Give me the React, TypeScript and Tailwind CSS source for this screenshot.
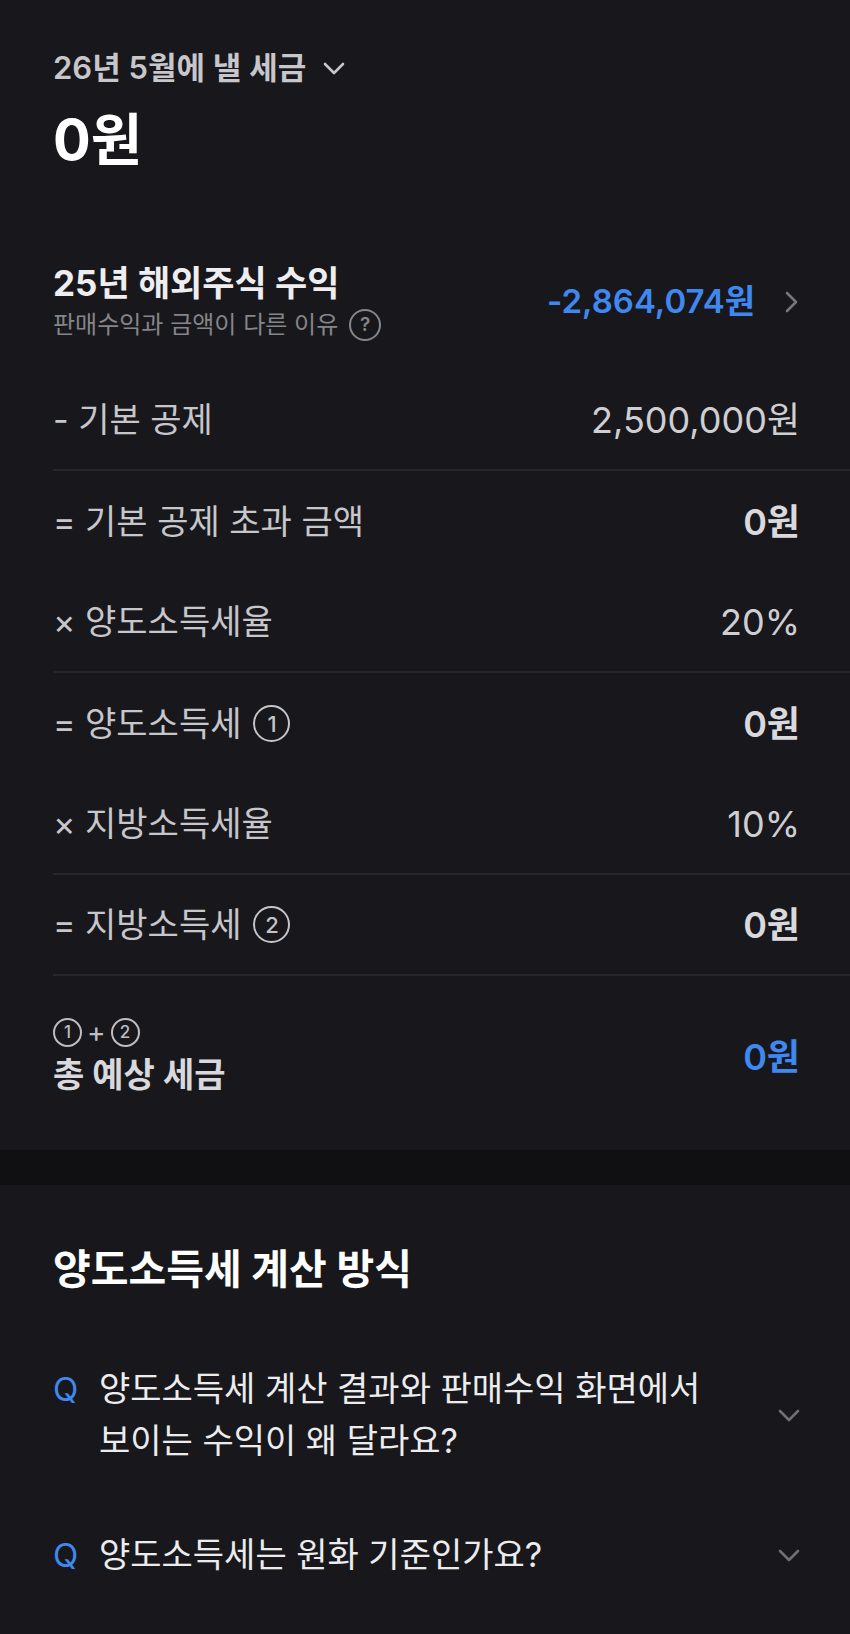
import React from "react";

type Row = {
  label: React.ReactNode;
  value: string;
  bold?: boolean;
  divider?: boolean;
};

function Circ({ n, small }: { n: number; small?: boolean }) {
  return (
    <span
      className={
        small
          ? "inline-flex w-[29px] h-[29px] rounded-full border-2 border-[#bdbdc2] items-center justify-center text-[17px] font-medium text-[#bdbdc2] leading-none"
          : "inline-flex w-[37px] h-[37px] rounded-full border-2 border-[#c4c4c9] items-center justify-center text-[22px] font-medium text-[#c4c4c9] leading-none"
      }
    >
      {n}
    </span>
  );
}

function Down({ className }: { className?: string }) {
  return (
    <svg width="22" height="13" viewBox="0 0 22 13" fill="none" className={className}>
      <polyline points="2,2 11,11 20,2" stroke="currentColor" strokeWidth="2.6" strokeLinecap="round" strokeLinejoin="round" />
    </svg>
  );
}

const rows: Row[] = [
  { label: "- 기본 공제", value: "2,500,000원", divider: true },
  { label: "= 기본 공제 초과 금액", value: "0원", bold: true },
  { label: "× 양도소득세율", value: "20%", divider: true },
  {
    label: (
      <span className="flex items-center gap-[12px]">
        = 양도소득세 <Circ n={1} />
      </span>
    ),
    value: "0원",
    bold: true,
  },
  { label: "× 지방소득세율", value: "10%", divider: true },
  {
    label: (
      <span className="flex items-center gap-[12px]">
        = 지방소득세 <Circ n={2} />
      </span>
    ),
    value: "0원",
    bold: true,
    divider: true,
  },
];

const faqs = [
  ["양도소득세 계산 결과와 판매수익 화면에서", "보이는 수익이 왜 달라요?"],
  ["양도소득세는 원화 기준인가요?"],
];

export default function App() {
  return (
    <div className="min-h-[1634px] bg-[#18181c] font-['Inter','Noto_Sans_CJK_KR',sans-serif]">
      {/* Summary */}
      <section className="pt-[48px]">
        <div className="px-[53px]">
          <button className="flex items-center h-[40px] gap-[17px] text-[31px] font-semibold text-[#c6c6cb]">
            26년 5월에 낼 세금
            <Down className="text-[#c6c6cb]" />
          </button>
          <p className="mt-[20px] h-[64px] leading-[64px] text-[56px] font-bold text-white">0원</p>
        </div>

        <div className="mt-[89px] pl-[53px] pr-[51px] flex items-center justify-between">
          <div>
            <p className="text-[35px] font-bold leading-[44px] text-[#eeeef0]">25년 해외주식 수익</p>
            <div className="mt-[2px] flex items-center gap-[11px] h-[36px]">
              <span className="text-[24px] text-[#85858a]">판매수익과 금액이 다른 이유</span>
              <span className="w-[32px] h-[32px] rounded-full border-2 border-[#85858a] flex items-center justify-center text-[19px] font-semibold text-[#85858a]">
                ?
              </span>
            </div>
          </div>
          <div className="flex items-center gap-[30px]">
            <span className="text-[33px] font-semibold text-[#3f88ef]">-2,864,074원</span>
            <svg width="14" height="22" viewBox="0 0 14 22" fill="none">
              <polyline points="2,2 11,11 2,20" stroke="#76767b" strokeWidth="2.6" strokeLinecap="round" strokeLinejoin="round" />
            </svg>
          </div>
        </div>

        {/* Calculation rows */}
        <div className="mt-[27px] ml-[53px]">
          {rows.map((r, i) => (
            <div
              key={i}
              className={
                r.divider
                  ? "flex items-center justify-between h-[101px] pr-[50px] border-b-2 border-[#26262b]"
                  : "flex items-center justify-between h-[101px] pr-[50px]"
              }
            >
              <span className="text-[34px] text-[#c6c6cb]">{r.label}</span>
              <span
                className={
                  r.bold
                    ? "text-[36px] font-semibold text-[#d9d9dd]"
                    : "text-[36px] text-[#cfcfd3]"
                }
              >
                {r.value}
              </span>
            </div>
          ))}

          <div className="flex items-center justify-between pt-[40px] pb-[53px] pr-[50px]">
            <div>
              <div className="flex items-center gap-[5px] h-[32px]">
                <Circ n={1} small />
                <span className="text-[28px] text-[#bdbdc2] leading-none">+</span>
                <Circ n={2} small />
              </div>
              <p className="mt-[5px] text-[34px] font-bold leading-[44px] text-[#d9d9dd]">총 예상 세금</p>
            </div>
            <span className="text-[36px] font-semibold text-[#3f88ef]">0원</span>
          </div>
        </div>
      </section>

      <div className="h-[35px] bg-[#101012]" />

      {/* How it's calculated */}
      <section className="pt-[60px]">
        <h2 className="px-[53px] h-[48px] leading-[48px] text-[41px] font-bold text-white">양도소득세 계산 방식</h2>
        <ul className="mt-[39px]">
          {faqs.map((lines) => (
            <li key={lines[0]} className="flex items-center justify-between py-[31px] pl-[53px] pr-[50px]">
              <div className="flex items-start">
                <span className="w-[46px] shrink-0 text-[33px] leading-[52px] text-[#3f88ef]">Q</span>
                <p className="text-[34px] leading-[52px] text-[#ececee]">
                  {lines.map((l) => (
                    <span key={l} className="block">
                      {l}
                    </span>
                  ))}
                </p>
              </div>
              <Down className="text-[#6f6f74] shrink-0" />
            </li>
          ))}
        </ul>
      </section>
    </div>
  );
}
